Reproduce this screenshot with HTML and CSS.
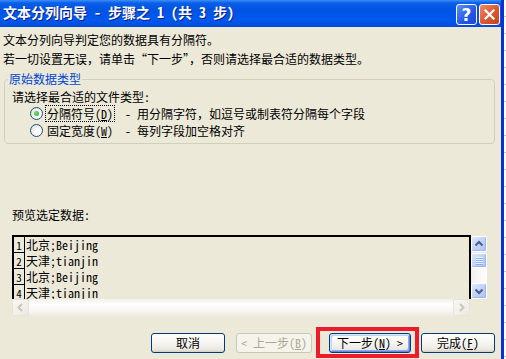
FILE: index.html
```html
<!DOCTYPE html>
<html lang="zh-CN">
<head>
    <meta charset="UTF-8">
    <title>文本分列向导</title>
    <link rel="stylesheet" href="styles.css">
</head>
<body>
    <div class="screen">
        <div class="window">
            <div class="titlebar">
                <span class="title">文本分列向导 - 步骤之 1 (共 3 步)</span>
                <div class="title-btns">
                    <span class="tbtn help">?</span>
                    <span class="tbtn close">
                        <svg width="13" height="13" viewBox="0 0 13 13"><path d="M2.5 2.5L10.5 10.5M10.5 2.5L2.5 10.5" stroke="#fff" stroke-width="2.2" stroke-linecap="square"/></svg>
                    </span>
                </div>
            </div>
            <div class="client">
                <p class="intro">文本分列向导判定您的数据具有分隔符。<br>若一切设置无误，请单击“下一步”，否则请选择最合适的数据类型。</p>
                <fieldset class="group">
                    <legend>原始数据类型</legend>
                    <div class="prompt">请选择最合适的文件类型:</div>
                    <div class="radio-row">
                        <span class="radio checked"></span>
                        <span class="radio-label focused">分隔符号(<u>D</u>)</span>
                        <span class="radio-desc">- 用分隔字符，如逗号或制表符分隔每个字段</span>
                    </div>
                    <div class="radio-row">
                        <span class="radio"></span>
                        <span class="radio-label">固定宽度(<u>W</u>)</span>
                        <span class="radio-desc">- 每列字段加空格对齐</span>
                    </div>
                </fieldset>
                <div class="preview-label">预览选定数据:</div>
                <div class="preview">
                    <div class="preview-main">
                        <div class="preview-box">
                            <div class="prow"><span class="pnum">1</span><span class="ptext">北京;Beijing</span></div>
                            <div class="prow"><span class="pnum">2</span><span class="ptext">天津;tianjin</span></div>
                            <div class="prow"><span class="pnum">3</span><span class="ptext">北京;Beijing</span></div>
                            <div class="prow"><span class="pnum">4</span><span class="ptext">天津;tianjin</span></div>
                        </div>
                        <div class="vscroll">
                            <span class="sbtn"><svg width="14" height="14" viewBox="0 0 14 14"><path d="M3.5 8.5L7 5L10.5 8.5" fill="none" stroke="#4d6185" stroke-width="2"/></svg></span>
                            <span class="sthumb"><i></i><i></i><i></i><i></i></span>
                            <span class="strack"></span>
                            <span class="sbtn"><svg width="14" height="14" viewBox="0 0 14 14"><path d="M3.5 5.5L7 9L10.5 5.5" fill="none" stroke="#4d6185" stroke-width="2"/></svg></span>
                        </div>
                    </div>
                    <div class="hscroll">
                        <span class="hbtn"><svg width="15" height="15" viewBox="0 0 15 15"><path d="M9 4L5.5 7.5L9 11" fill="none" stroke="#c8c6bd" stroke-width="2"/></svg></span>
                        <span class="htrack"></span>
                        <span class="hbtn"><svg width="15" height="15" viewBox="0 0 15 15"><path d="M6 4L9.5 7.5L6 11" fill="none" stroke="#c8c6bd" stroke-width="2"/></svg></span>
                    </div>
                </div>
                <div class="buttons">
                    <button class="btn cancel">取消</button>
                    <button class="btn prev" disabled>&lt; 上一步(<u>B</u>)</button>
                    <button class="btn next">下一步(<u>N</u>) &gt;</button>
                    <button class="btn finish">完成(<u>F</u>)</button>
                </div>
            </div>
        </div>
        <div class="desk"></div>
        <div class="mark"></div>
    </div>
</body>
</html>
```

FILE: styles.css
```css
body {
    margin: 0;
    background-color: #fff;
}
.screen {
    position: relative;
    display: flex;
    width: 506px;
    height: 359px;
    overflow: hidden;
    font-family: "Noto Sans Mono CJK SC", "Noto Sans CJK SC", monospace;
    font-size: 12px;
    color: #000;
}
.window {
    width: 501px;
    border-right: 3px solid #0831d9;
    background-color: #ece9d8;
    display: flex;
    flex-direction: column;
}
.desk {
    flex: 1;
    background: repeating-linear-gradient(#fff 0 16px, #c8c8c8 16px 17px);
}
.titlebar {
    height: 27px;
    display: flex;
    justify-content: space-between;
    align-items: flex-start;
    padding-left: 3px;
    background: linear-gradient(#3d8ef8 0, #0a5fe8 3px, #0054e3 9px, #0058ee 20px, #004bd8 27px);
}
.title {
    font-size: 14px;
    font-weight: bold;
    line-height: 24px;
    color: #fff;
    text-shadow: 1px 1px #0f1d8a;
}
.title-btns {
    display: flex;
    gap: 2px;
    margin: 4px 1px 0 0;
}
.tbtn {
    width: 21px;
    height: 21px;
    box-sizing: border-box;
    border: 1px solid #fff;
    border-radius: 3px;
    display: flex;
    justify-content: center;
    align-items: center;
    color: #fff;
}
.help {
    background: linear-gradient(135deg, #5c8ff7, #2457e4 60%, #1b48d2);
    font-family: "DejaVu Sans", sans-serif;
    font-size: 17px;
    font-weight: bold;
}
.close {
    background: linear-gradient(135deg, #ee8b69, #dd5a31 50%, #c8431c);
}
.intro {
    margin: 3px 0 0 3px;
    line-height: 19px;
}
.group {
    margin: 4px 6px 0 4px;
    padding: 0 3px 4px;
    border: 1px solid #d0d0bf;
    border-radius: 4px;
    min-width: 0;
}
.group legend {
    padding: 0 1px;
    color: #0046d5;
    line-height: 14px;
}
.prompt {
    margin: 2px 0 0 4px;
    line-height: 17px;
}
.radio-row {
    display: flex;
    align-items: center;
    height: 17px;
    padding-left: 22px;
}
.radio {
    width: 13px;
    height: 13px;
    box-sizing: border-box;
    border: 1px solid #1c5180;
    border-radius: 50%;
    background: radial-gradient(circle at 65% 65%, #fff 20%, #dcd8cb);
    display: flex;
    justify-content: center;
    align-items: center;
}
.radio.checked::after {
    content: "";
    width: 5px;
    height: 5px;
    border-radius: 50%;
    background: radial-gradient(circle at 40% 40%, #7ee07e, #21a121);
}
.radio-label {
    margin-left: 2px;
    padding: 0 1px;
    border: 1px dotted transparent;
    line-height: 15px;
}
.radio-label.focused {
    border-color: #000;
}
.radio-desc {
    margin-left: 10px;
}
.preview-label {
    margin: 63px 0 0 12px;
    line-height: 16px;
}
.preview {
    margin: 12px 0 0 12px;
    width: 475px;
}
.preview-main {
    display: flex;
    height: 64px;
}
.preview-box {
    width: 459px;
    box-sizing: border-box;
    border: 2px solid #000;
    border-bottom: none;
    overflow: hidden;
}
.prow {
    display: flex;
    height: 16px;
    line-height: 16px;
}
.pnum {
    width: 10px;
    box-sizing: content-box;
    border-right: 1px solid #000;
    border-bottom: 1px solid #000;
    font-size: 11px;
    line-height: 17px;
    padding-left: 0;
    text-align: center;
    height: 15px;
    overflow: hidden;
}
.ptext {
    padding-left: 1px;
}
.vscroll {
    width: 16px;
    display: flex;
    flex-direction: column;
    padding-top: 1px;
    box-sizing: border-box;
}
.sbtn, .sthumb {
    height: 16px;
    box-sizing: border-box;
    border: 1px solid #fff;
    border-radius: 2px;
    background: linear-gradient(135deg, #dde8fe, #bccffb 60%, #aec4f7);
    box-shadow: inset -1px -1px #9db6ec;
    display: flex;
    justify-content: center;
    align-items: center;
}
.sthumb {
    height: 15px;
    margin-top: 1px;
    flex-direction: column;
    gap: 1px;
}
.sthumb i {
    width: 7px;
    height: 1px;
    background-color: #eef4fe;
    box-shadow: 0 1px #8cb0f8;
}
.sthumb i + i {
    margin-top: 0;
}
.strack {
    flex: 1;
    background: linear-gradient(90deg, #f3f1ec, #fefefe);
}
.hscroll {
    display: flex;
    width: 458px;
    height: 17px;
    background: linear-gradient(#f2f1ea, #fefefe 30%, #f7f6f2 70%, #ebe9e0);
}
.hbtn {
    width: 17px;
    height: 17px;
    box-sizing: border-box;
    border: 1px solid #e6e4da;
    border-radius: 2px;
    background: linear-gradient(135deg, #f8f7f3, #ebe9e1);
    display: flex;
    justify-content: center;
    align-items: center;
}
.htrack {
    flex: 1;
}
.buttons {
    display: flex;
    margin: 17px 0 0 151px;
}
.btn {
    height: 20px;
    box-sizing: border-box;
    padding: 0;
    border: 1px solid #003c74;
    border-radius: 3px;
    background: linear-gradient(#fff, #f6f5f1 50%, #ebe9e2 85%, #d6d0c5);
    font-family: inherit;
    font-size: 12px;
    line-height: 16px;
    color: #000;
}
.cancel {
    width: 74px;
}
.prev {
    width: 76px;
    margin-left: 11px;
    border-color: #c9c7ba;
    background: #f5f4ea;
    color: #aca899;
}
.next {
    width: 82px;
    margin-left: 17px;
    box-shadow: inset 1px 1px #cee7ff, inset -1px -1px #6982ee, inset 2px 2px #bcd4f6, inset -2px -2px #89ade4;
}
.finish {
    width: 74px;
    margin-left: 10px;
}
.mark {
    position: absolute;
    left: 316px;
    top: 327px;
    width: 103px;
    height: 31px;
    box-sizing: border-box;
    border: 4px solid #ec1c2a;
}
```
